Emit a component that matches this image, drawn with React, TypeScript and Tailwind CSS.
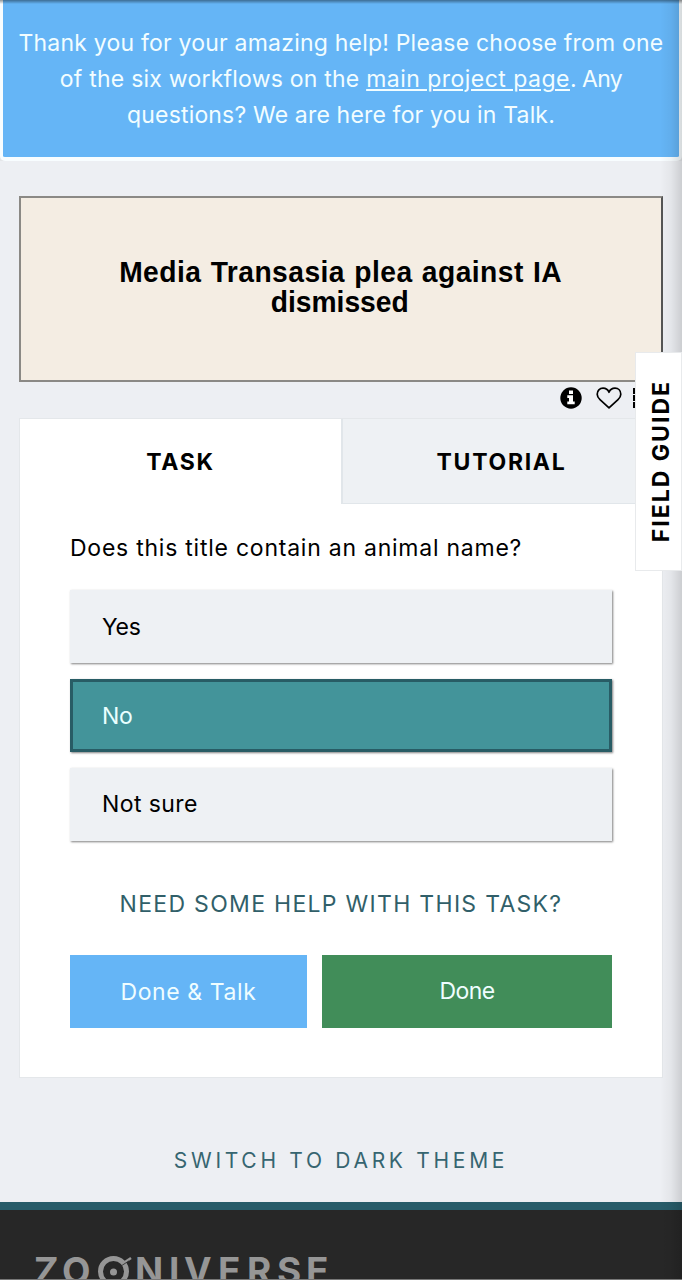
import { useState } from "react";
import clsx from "clsx";

const answers = ["Yes", "No", "Not sure"];

function Banner() {
  return (
    <div className="h-[161px] bg-[#e4e6e9]">
      <div className="h-[161px] rounded-b-[5px] border-x-3 border-b-4 border-[#f8fdff] bg-[#65b5f6] pt-[25px] text-center text-[23px] leading-[36px] whitespace-nowrap text-[#f2fdff]">
        <p className="-mx-1 tracking-[0.21px]">Thank you for your amazing help! Please choose from one</p>
        <p className="tracking-[0.22px]">
          of the six workflows on the{" "}
          <a className="tracking-[0.48px] underline decoration-2 underline-offset-2">main project page</a>
          <span className="tracking-[-0.6px]">. Any</span>
        </p>
        <p className="tracking-[0.17px]">questions? We are here for you in Talk.</p>
      </div>
    </div>
  );
}

function InfoIcon() {
  return (
    <svg className="h-[22px] w-[22px]" viewBox="0 0 22 22">
      <circle cx="11" cy="11" r="10.7" fill="#000" />
      <path d="M9 3.6h4v3.5H9zM7.3 8.3H13v6.3h1.7v2.6H7.3v-2.6H9v-3.7H7.3z" fill="#fff" />
    </svg>
  );
}

function HeartIcon() {
  return (
    <svg className="h-[22px] w-[26px]" viewBox="0 0 26 22" fill="none" stroke="#000" strokeWidth="1.7" strokeLinejoin="round">
      <path d="M13 20.8L4 12.6C2 10.7 1.2 9 1.2 7.2C1.2 3.7 3.7 1.2 7 1.2C9.8 1.2 12 2.8 13 5.3C14 2.8 16.2 1.2 19 1.2C22.3 1.2 24.8 3.7 24.8 7.2C24.8 9 24 10.7 22 12.6Z" />
    </svg>
  );
}

function Subject() {
  return (
    <>
      <div className="flex h-[186px] items-center justify-center border-2 border-[#8b8985] border-r-[#555] bg-[#f4ede3] text-center">
        <div className="mt-[-5px] origin-center scale-x-94 font-['Liberation_Sans',sans-serif] text-[30px] leading-[30px] font-bold whitespace-nowrap">
          <p className="tracking-[0.5px] [word-spacing:1px]">Media Transasia plea against IA</p>
          <p className="pr-[2px]">dismissed</p>
        </div>
      </div>
      <div className="flex h-[36px] items-center justify-end pr-[28px] pb-[4px]">
        <InfoIcon />
        <span className="ml-[14px]">
          <HeartIcon />
        </span>
        <span className="ml-[11px] h-[20px] w-[2px] border-l-2 border-dashed border-black" />
      </div>
    </>
  );
}

function Tabs() {
  return (
    <div className="grid h-[85px] grid-cols-2 text-[23px] leading-[86px] font-bold">
      <div className="h-[85px] text-center tracking-[1.7px]">TASK</div>
      <div className="h-[85px] border-b border-l-2 border-[#e1e6ea] bg-[#eef1f4] pr-[2px] text-center tracking-[1.7px]">TUTORIAL</div>
    </div>
  );
}

function Task() {
  const [selected, setSelected] = useState("No");

  return (
    <section className="h-[660px] border border-[#e4e7ea] bg-white">
      <Tabs />
      <div className="px-[50px] pt-[26px]">
        <p className="text-[23px] leading-[36px] tracking-[0.76px] whitespace-nowrap">Does this title contain an animal name?</p>
        <div className="mt-[24px] flex flex-col gap-[16px]">
          {answers.map((answer) => (
            <button
              key={answer}
              onClick={() => setSelected(answer)}
              className={clsx(
                "h-[73px] border-3 px-[29px] text-left text-[23px] shadow-[1px_1px_2px_rgba(0,0,0,0.5)]",
                answer === "Not sure" ? "tracking-[0.4px]" : "pt-[1px] tracking-[-0.3px]",
                answer === selected ? "border-[#285c65] bg-[#43949a] text-[#e9ffff]" : "border-[#eef1f4] bg-[#eef1f4] text-black",
              )}
            >
              {answer}
            </button>
          ))}
        </div>
        <p className="mt-[45px] text-center text-[23px] leading-[37px] tracking-[1.3px] whitespace-nowrap text-[#315f69]">
          NEED SOME HELP WITH THIS TASK?
        </p>
        <div className="mt-[32px] flex h-[73px] gap-[15px] text-[23px] text-[#effdff]">
          <button className="w-[237px] bg-[#65b5f6] pt-px tracking-[0.6px]">Done &amp; Talk</button>
          <button className="flex-1 bg-[#418d59] tracking-[-0.6px]">Done</button>
        </div>
      </div>
    </section>
  );
}

function Footer() {
  return (
    <footer className="h-[78px] overflow-hidden border-t-8 border-[#285c69] bg-[#272727]">
      <div className="mt-[42px] ml-[34px] flex text-[37px] leading-[38px] font-bold text-[#969696]">
        <span className="w-[28px]">Z</span>
        <span className="w-[35px]">O</span>
        <svg className="mt-[3px] h-[32px] w-[38px]" viewBox="0 0 38 32" fill="none" stroke="#969696">
          <circle cx="16.5" cy="16.5" r="13" strokeWidth="5" />
          <circle cx="16.5" cy="17" r="3.5" fill="#969696" stroke="none" />
          <path d="M25 9L34 3" strokeWidth="2.5" />
          <path d="M21 13L32 5.8" stroke="#272727" strokeWidth="0.8" />
        </svg>
        <span className="w-[34px]">N</span>
        <span className="w-[15px]">I</span>
        <span className="w-[34px]">V</span>
        <span className="w-[29px]">E</span>
        <span className="w-[30px]">R</span>
        <span className="w-[29px]">S</span>
        <span>E</span>
      </div>
    </footer>
  );
}

export default function App() {
  return (
    <div className="relative h-[1280px] w-[682px] overflow-hidden bg-[#edeff3] font-['Inter',sans-serif] text-black">
      <Banner />
      <main className="mt-[35px] px-[19px]">
        <Subject />
        <Task />
        <p className="mt-[65px] text-center text-[21px] leading-[36px] tracking-[3.7px] whitespace-nowrap text-[#366570]">
          SWITCH TO DARK THEME
        </p>
      </main>
      <div className="mt-[23px]">
        <Footer />
      </div>
      <div className="absolute inset-x-0 top-0 h-[4px] bg-linear-to-b from-black/40 to-transparent" />
      <div className="absolute inset-y-0 right-0 w-[22px] bg-linear-to-r from-transparent via-black/4 to-black/14" />
      <div className="absolute inset-x-0 bottom-0 h-px bg-[#777]" />
      <div className="absolute top-[352px] right-0 flex h-[219px] w-[47px] items-center justify-center border border-[#e8eaec] bg-white pl-[6px]">
        <span className="rotate-180 text-[23px] font-bold tracking-[2px] whitespace-nowrap [writing-mode:vertical-rl]">FIELD GUIDE</span>
      </div>
    </div>
  );
}
